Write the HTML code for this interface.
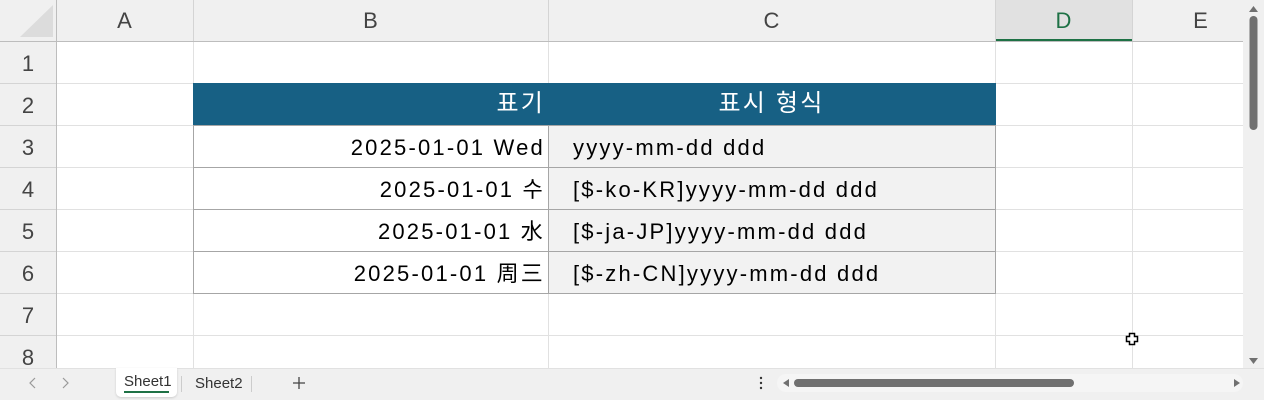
<!DOCTYPE html>
<html><head><meta charset="utf-8"><style>
*{margin:0;padding:0;box-sizing:border-box}
body{width:1264px;height:400px;overflow:hidden;background:#fff;position:relative;font-family:"Liberation Sans","Noto Sans CJK KR",sans-serif}
.a{position:absolute}
.hl{position:absolute;height:1px;background:#e1e1e1}
.vl{position:absolute;width:1px;background:#e1e1e1}
.ch{position:absolute;top:0;height:41px;line-height:41px;text-align:center;font-size:22px;color:#444}
.rh{position:absolute;left:0;width:56px;text-align:center;font-size:22px;color:#444;line-height:44px}
.t{position:absolute;font-size:22px;color:#000;line-height:44px;white-space:nowrap;letter-spacing:2.2px}
.r{text-align:right;letter-spacing:2.2px}
</style></head><body>
<div class="a" style="left:0;top:0;width:1243px;height:41px;background:#f0f0f0"></div>
<div class="a" style="left:0;top:0;width:56px;height:368px;background:#f0f0f0"></div>
<div class="a" style="left:995px;top:0;width:137px;height:41px;background:#e1e1e1"></div>
<div class="a" style="left:995px;top:39px;width:137px;height:2px;background:#1e7145"></div>
<svg class="a" style="left:18px;top:4px" width="36" height="34"><polygon points="35,1 35,33 2,33" fill="#dcdcdc"/></svg>
<div class="a" style="left:56px;top:0;width:1px;height:368px;background:#bdbdbd"></div>
<div class="a" style="left:0;top:41px;width:1243px;height:1px;background:#bdbdbd"></div>
<div class="vl" style="left:193px;top:0;height:41px;background:#d4d4d4"></div>
<div class="vl" style="left:548px;top:0;height:41px;background:#d4d4d4"></div>
<div class="vl" style="left:995px;top:0;height:41px;background:#d4d4d4"></div>
<div class="vl" style="left:1132px;top:0;height:41px;background:#d4d4d4"></div>
<div class="ch" style="left:56px;width:137px">A</div>
<div class="ch" style="left:193px;width:355px">B</div>
<div class="ch" style="left:548px;width:447px">C</div>
<div class="ch" style="left:995px;width:137px;color:#1e7145">D</div>
<div class="ch" style="left:1132px;width:137px">E</div>
<div class="vl" style="left:193px;top:42px;height:326px"></div>
<div class="vl" style="left:548px;top:42px;height:326px"></div>
<div class="vl" style="left:995px;top:42px;height:326px"></div>
<div class="vl" style="left:1132px;top:42px;height:326px"></div>
<div class="hl" style="left:57px;top:83px;width:1186px"></div>
<div class="hl" style="left:57px;top:125px;width:1186px"></div>
<div class="hl" style="left:57px;top:167px;width:1186px"></div>
<div class="hl" style="left:57px;top:209px;width:1186px"></div>
<div class="hl" style="left:57px;top:251px;width:1186px"></div>
<div class="hl" style="left:57px;top:293px;width:1186px"></div>
<div class="hl" style="left:57px;top:335px;width:1186px"></div>
<div class="hl" style="left:0;top:83px;width:56px;background:#d4d4d4"></div>
<div class="hl" style="left:0;top:125px;width:56px;background:#d4d4d4"></div>
<div class="hl" style="left:0;top:167px;width:56px;background:#d4d4d4"></div>
<div class="hl" style="left:0;top:209px;width:56px;background:#d4d4d4"></div>
<div class="hl" style="left:0;top:251px;width:56px;background:#d4d4d4"></div>
<div class="hl" style="left:0;top:293px;width:56px;background:#d4d4d4"></div>
<div class="hl" style="left:0;top:335px;width:56px;background:#d4d4d4"></div>
<div class="rh" style="top:42px">1</div>
<div class="rh" style="top:84px">2</div>
<div class="rh" style="top:126px">3</div>
<div class="rh" style="top:168px">4</div>
<div class="rh" style="top:210px">5</div>
<div class="rh" style="top:252px">6</div>
<div class="rh" style="top:294px">7</div>
<div class="rh" style="top:336px">8</div>
<div class="a" style="left:193px;top:83px;width:803px;height:43px;background:#176084"></div>
<div class="a" style="left:548px;top:126px;width:447px;height:167px;background:#f2f2f2"></div>
<div class="a" style="left:193px;top:125px;width:803px;height:169px;border:1px solid #a6a6a6"></div>
<div class="a" style="left:193px;top:167px;width:803px;height:1px;background:#a6a6a6"></div>
<div class="a" style="left:193px;top:209px;width:803px;height:1px;background:#a6a6a6"></div>
<div class="a" style="left:193px;top:251px;width:803px;height:1px;background:#a6a6a6"></div>
<div class="a" style="left:548px;top:125px;width:1px;height:169px;background:#a6a6a6"></div>
<div class="t" style="left:193px;top:82px;width:352px;text-align:right;color:#fff;font-size:24px">표기</div>
<div class="t" style="left:548px;top:82px;width:447px;text-align:center;color:#fff;font-size:24px">표시 형식</div>
<div class="t r" style="left:193px;top:126px;width:352px">2025-01-01 Wed</div>
<div class="t r" style="left:193px;top:168px;width:352px">2025-01-01 수</div>
<div class="t r" style="left:193px;top:210px;width:352px;font-family:'Liberation Sans','Noto Sans CJK JP',sans-serif">2025-01-01 水</div>
<div class="t r" style="left:193px;top:252px;width:352px;font-family:'Liberation Sans','Noto Sans CJK SC',sans-serif">2025-01-01 周三</div>
<div class="t" style="left:573px;top:126px">yyyy-mm-dd ddd</div>
<div class="t" style="left:573px;top:168px">[$-ko-KR]yyyy-mm-dd ddd</div>
<div class="t" style="left:573px;top:210px">[$-ja-JP]yyyy-mm-dd ddd</div>
<div class="t" style="left:573px;top:252px">[$-zh-CN]yyyy-mm-dd ddd</div>
<svg class="a" style="left:1125px;top:332px" width="15" height="15"><path d="M4.5 1.5h5v3h3v5h-3v3h-5v-3h-3v-5h3z" fill="#fff" stroke="#000" stroke-width="1.5"/></svg>
<div class="a" style="left:1243px;top:0;width:21px;height:368px;background:#f0f0f0"></div>
<svg class="a" style="left:1243px;top:0" width="21" height="368"><polygon points="6,12 15,12 10.5,6" fill="#707070"/><rect x="6.5" y="16" width="8" height="114" rx="4" fill="#707070"/><polygon points="6,358 15,358 10.5,364" fill="#707070"/></svg>
<div class="a" style="left:0;top:368px;width:1264px;height:32px;background:#f0f0f0;border-top:1px solid #e1e1e1"></div>
<svg class="a" style="left:24px;top:374px" width="50" height="18"><path d="M11 4l-5 5 5 5M39 4l5 5-5 5" fill="none" stroke="#999" stroke-width="1.2"/></svg>
<div class="a" style="left:116px;top:368px;width:61px;height:29px;background:#fff;border-radius:0 0 5px 5px;box-shadow:0 1px 2px #ccc"></div>
<div class="a" style="left:124px;top:373px;font-size:15px;color:#333">Sheet1</div>
<div class="a" style="left:124px;top:391px;width:45px;height:2px;background:#1e7145"></div>
<div class="a" style="left:181px;top:376px;width:1px;height:16px;background:#ccc"></div>
<div class="a" style="left:195px;top:375px;font-size:15px;color:#333">Sheet2</div>
<div class="a" style="left:251px;top:376px;width:1px;height:16px;background:#ccc"></div>
<svg class="a" style="left:292px;top:376px" width="14" height="14"><path d="M7 1v12M1 7h12" stroke="#444" stroke-width="1.3"/></svg>
<svg class="a" style="left:755px;top:372px" width="12" height="24"><circle cx="6" cy="6" r="1.2" fill="#333"/><circle cx="6" cy="11" r="1.2" fill="#333"/><circle cx="6" cy="16" r="1.2" fill="#333"/></svg>
<div class="a" style="left:777px;top:374px;width:466px;height:18px;background:#f5f5f5;border-radius:9px"></div>
<svg class="a" style="left:777px;top:374px" width="470" height="18"><polygon points="6,9 12,5 12,13" fill="#707070"/><rect x="17" y="5" width="280" height="8" rx="4" fill="#707070"/><polygon points="463,9 457,5 457,13" fill="#707070"/></svg>
</body></html>
